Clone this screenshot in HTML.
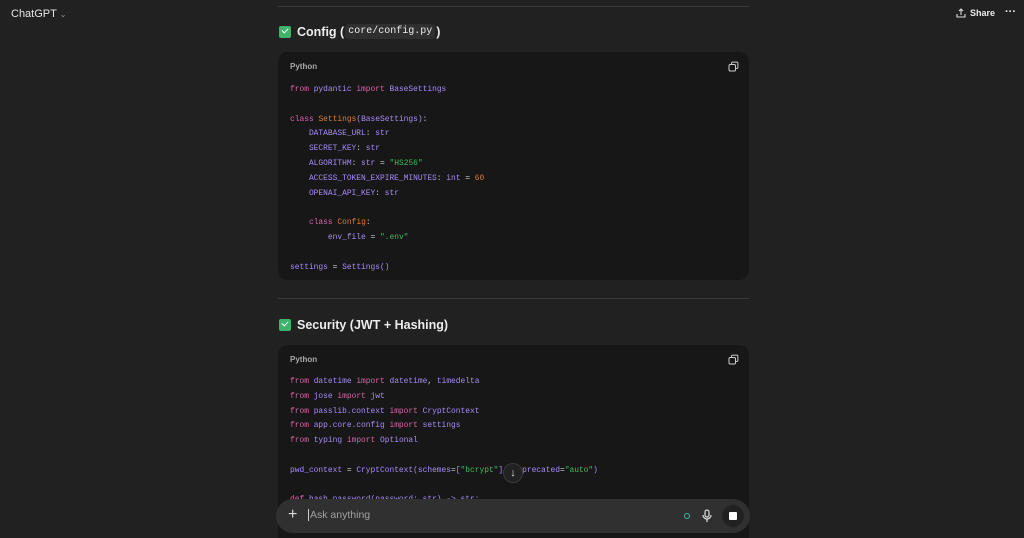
<!DOCTYPE html>
<html style="overflow:hidden;height:538px"><head><meta charset="utf-8"><style>
*{margin:0;padding:0;box-sizing:border-box}
body{width:1024px;height:538px;background:#212121;font-family:"Liberation Sans",sans-serif;color:#ececec;position:relative;overflow:hidden}
.abs{position:absolute}
.hr{position:absolute;left:278px;width:471px;height:1px;background:#3a3a3a}
.h{position:absolute;left:279px;font-size:12.5px;font-weight:bold;display:flex;align-items:center}
.chk{width:12px;height:12px;background:#3fb26b;border-radius:2px;margin-right:6px;position:relative}
.chk:after{content:"";position:absolute;left:3px;top:2px;width:5px;height:3px;border-left:1.5px solid #fff;border-bottom:1.5px solid #fff;transform:rotate(-45deg)}
.code{position:absolute;left:278px;width:471px;background:#171717;border-radius:10px}
.lang{position:absolute;left:12px;top:10px;font-size:8px;color:#a8a8a8;font-weight:bold}
.copy{position:absolute;right:10px;top:9px}
pre{position:absolute;left:12px;font-family:"Liberation Mono",monospace;font-size:7.9px;line-height:14.8px;color:#a78bfa}
.k{color:#d864a8}.c{color:#e07b39}.s{color:#3dbd5d}.n{color:#e07b39}.w{color:#cfcfcf}
</style></head><body>
<div class="abs" style="left:11px;top:8px;font-size:11px;color:#e5e5e5">ChatGPT <span style="font-size:8px;color:#999">&#8964;</span></div>
<div class="abs" style="left:956px;top:8px;font-size:9px;font-weight:bold;display:flex;align-items:center;gap:4px">
<svg width="10" height="10" viewBox="0 0 10 10" fill="none" stroke="#ddd" stroke-width="1.1"><path d="M5 7V1M3 3l2-2 2 2M1 6v3h8V6"/></svg>Share</div>
<div class="abs" style="left:1005px;top:6px;font-size:11px;font-weight:bold">···</div>
<div class="hr" style="top:6px"></div>
<div class="h" style="top:24px"><span class="chk"></span>Config (<span style="font-family:'Liberation Mono',monospace;font-weight:normal;font-size:10px;background:#2f2f2f;padding:2px 3px;border-radius:4px;margin:0 1px">core/config.py</span>)</div>
<div class="code" style="top:52px;height:228px">
<div class="lang">Python</div>
<svg class="copy" width="11" height="11" viewBox="0 0 11 11" fill="none" stroke="#ccc" stroke-width="1"><rect x="1" y="3.5" width="6.5" height="6.5" rx="1.3"/><path d="M3.5 3.5V2.3a1.2 1.2 0 0 1 1.2-1.2h4a1.2 1.2 0 0 1 1.2 1.2v4a1.2 1.2 0 0 1-1.2 1.2H7.5"/></svg>
<pre style="top:31px"><span class="k">from</span> pydantic <span class="k">import</span> BaseSettings

<span class="k">class</span> <span class="c">Settings</span>(BaseSettings)<span class="w">:</span>
    DATABASE_URL<span class="w">:</span> str
    SECRET_KEY<span class="w">:</span> str
    ALGORITHM<span class="w">:</span> str <span class="w">=</span> <span class="s">"HS256"</span>
    ACCESS_TOKEN_EXPIRE_MINUTES<span class="w">:</span> int <span class="w">=</span> <span class="n">60</span>
    OPENAI_API_KEY<span class="w">:</span> str

    <span class="k">class</span> <span class="c">Config</span><span class="w">:</span>
        env_file <span class="w">=</span> <span class="s">".env"</span>

settings <span class="w">=</span> Settings()</pre>
</div>
<div class="hr" style="top:298px"></div>
<div class="h" style="top:318px"><span class="chk"></span>Security (JWT + Hashing)</div>
<div class="code" style="top:345px;height:193px;border-radius:10px 10px 0 0">
<div class="lang" style="top:10px">Python</div>
<svg class="copy" width="11" height="11" viewBox="0 0 11 11" fill="none" stroke="#ccc" stroke-width="1"><rect x="1" y="3.5" width="6.5" height="6.5" rx="1.3"/><path d="M3.5 3.5V2.3a1.2 1.2 0 0 1 1.2-1.2h4a1.2 1.2 0 0 1 1.2 1.2v4a1.2 1.2 0 0 1-1.2 1.2H7.5"/></svg>
<pre style="top:30px"><span class="k">from</span> datetime <span class="k">import</span> datetime<span class="w">,</span> timedelta
<span class="k">from</span> jose <span class="k">import</span> jwt
<span class="k">from</span> passlib.context <span class="k">import</span> CryptContext
<span class="k">from</span> app.core.config <span class="k">import</span> settings
<span class="k">from</span> typing <span class="k">import</span> Optional

pwd_context <span class="w">=</span> CryptContext(schemes<span class="w">=</span>[<span class="s">"bcrypt"</span>], deprecated<span class="w">=</span><span class="s">"auto"</span>)

<span class="k">def</span> hash_password(password: str) -> str:</pre>
</div>
<div class="abs" style="left:503px;top:463px;width:20px;height:20px;border-radius:50%;background:#212121;border:1px solid #3a3a3a;color:#ddd;font-size:11px;text-align:center;line-height:18px">&#8595;</div>
<div class="abs" style="left:276px;top:499px;width:474px;height:34px;border-radius:17px;background:#303030">
<div class="abs" style="left:12px;top:7px;font-size:16px;color:#ddd;font-weight:300">+</div>
<div class="abs" style="left:32px;top:10px;font-size:10.5px;color:#a0a0a0;border-left:1px solid #ccc;padding-left:1px">Ask anything</div>
<div class="abs" style="left:408px;top:14px;width:6px;height:6px;border-radius:50%;border:1.5px solid #3fb9a0"></div>
<svg class="abs" style="left:426px;top:10px" width="10" height="14" viewBox="0 0 10 14" fill="none" stroke="#ddd" stroke-width="1.2"><rect x="3" y="1" width="4" height="7" rx="2"/><path d="M1 6a4 4 0 0 0 8 0M5 10v3"/></svg>
<div class="abs" style="left:446px;top:6px;width:22px;height:22px;border-radius:50%;background:#212121"><div class="abs" style="left:7px;top:7px;width:8px;height:8px;background:#fff;border-radius:1px"></div></div>
</div>
</body></html>
